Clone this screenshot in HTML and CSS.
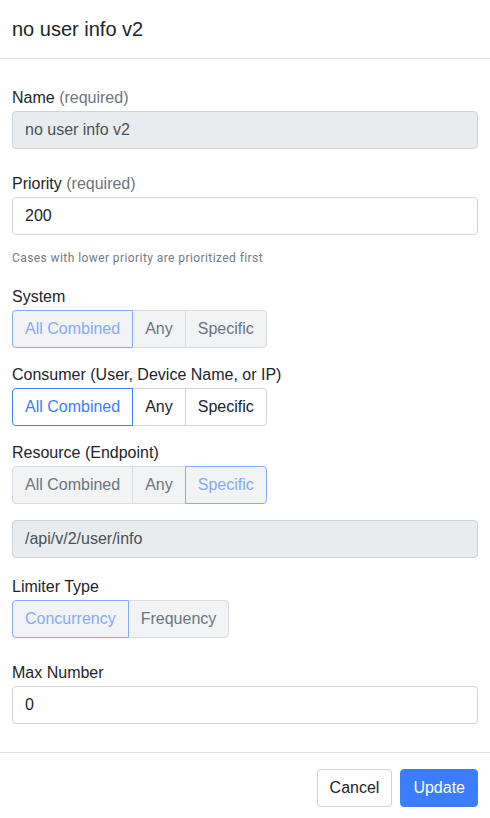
FILE: index.html
```html
<!DOCTYPE html>
<html>
<head>
<meta charset="utf-8">
<link rel="stylesheet" href="styles.css">
</head>
<body>
<div class="modal">
  <div class="modal-header">
    <h5 class="modal-title">no user info v2</h5>
  </div>
  <div class="modal-body">
    <div class="field first">
      <label class="form-label">Name <span class="req">(required)</span></label>
      <div class="form-control disabled">no user info v2</div>
    </div>
    <div class="field">
      <label class="form-label">Priority <span class="req">(required)</span></label>
      <div class="form-control">200</div>
      <div class="help">Cases with lower priority are prioritized first</div>
    </div>
    <div class="field group-field">
      <label class="form-label">System</label>
      <div class="btn-group is-disabled">
        <span class="seg active">All Combined</span><span class="seg">Any</span><span class="seg">Specific</span>
      </div>
    </div>
    <div class="field group-field">
      <label class="form-label">Consumer (User, Device Name, or IP)</label>
      <div class="btn-group">
        <span class="seg active">All Combined</span><span class="seg">Any</span><span class="seg">Specific</span>
      </div>
    </div>
    <div class="field group-field">
      <label class="form-label">Resource (Endpoint)</label>
      <div class="btn-group is-disabled">
        <span class="seg">All Combined</span><span class="seg">Any</span><span class="seg active">Specific</span>
      </div>
      <div class="form-control disabled endpoint">/api/v/2/user/info</div>
    </div>
    <div class="field group-field after-input">
      <label class="form-label">Limiter Type</label>
      <div class="btn-group is-disabled">
        <span class="seg active">Concurrency</span><span class="seg">Frequency</span>
      </div>
    </div>
    <div class="field">
      <label class="form-label">Max Number</label>
      <div class="form-control">0</div>
    </div>
  </div>
  <div class="modal-footer">
    <button class="btn btn-secondary">Cancel</button>
    <button class="btn btn-primary">Update</button>
  </div>
</div>
</body>
</html>
```

FILE: styles.css
```css
* { box-sizing: border-box; }
html, body { margin: 0; padding: 0; background: #fff; }
body {
  font-family: "Liberation Sans", Arial, sans-serif;
  font-size: 16px;
  line-height: 1.5;
  color: #212529;
}
.modal { width: 490px; }
.modal-header {
  padding: 14px 12px;
  border-bottom: 1px solid #dee2e6;
}
.modal-title {
  margin: 0;
  font-size: 20px;
  font-weight: 400;
  line-height: 30px;
}
.modal-body {
  padding: 27px 12px 28px;
  display: flex;
  flex-direction: column;
}
.field { margin-top: 23px; display: flex; flex-direction: column; align-items: flex-start; }
.field.first { margin-top: 0; }
.group-field { margin-top: 18px; }
.group-field + .group-field { margin-top: 15px; }
.group-field.after-input { margin-top: 17px; }
.group-field + .field:not(.group-field) { margin-top: 23px; }
.form-label {
  display: block;
  line-height: 24px;
  margin-bottom: 1px;
}
.req { color: #6c757d; }
.form-control {
  width: 100%;
  height: 38px;
  padding: 6px 12px;
  border: 1px solid #ced4da;
  border-radius: 4px;
  background: #fff;
  color: #212529;
  line-height: 24px;
}
.form-control.disabled {
  background: #e9ecef;
  color: #495057;
}
.endpoint { margin-top: 16px; }
.help {
  margin-top: 14px;
  font-family: Roboto, "Liberation Sans", sans-serif;
  font-size: 12px;
  line-height: 18px;
  color: #737b83;
  letter-spacing: 0.42px;
}
.btn-group {
  display: inline-flex;
}
.seg {
  display: inline-block;
  height: 38px;
  padding: 6px 12px;
  line-height: 24px;
  border: 1px solid #ced4da;
  margin-left: -1px;
  background: #fff;
  color: #212529;
}
.seg:first-child { margin-left: 0; border-radius: 4px 0 0 4px; }
.seg:last-child { border-radius: 0 4px 4px 0; }
.seg.active {
  border-color: #3b7dfd;
  color: #3b7dfd;
  position: relative;
  z-index: 1;
}
.is-disabled .seg {
  background: #f1f3f5;
  color: #6c757d;
  border-color: #d9dde1;
}
.is-disabled .seg.active {
  color: #86aafb;
  border-color: #86aafb;
}
.modal-footer {
  border-top: 1px solid #dee2e6;
  padding: 16px 12px;
  display: flex;
  justify-content: flex-end;
  gap: 8px;
}
.btn {
  font-family: "Liberation Sans", Arial, sans-serif;
  font-size: 16px;
  line-height: 24px;
  height: 38px;
  padding: 6px 12px;
  border-radius: 4px;
  border: 1px solid transparent;
}
.btn-secondary { background: #fff; border-color: #ced4da; color: #212529; }
.btn-primary { background: #3b7dfd; border-color: #3b7dfd; color: #fff; }
```
